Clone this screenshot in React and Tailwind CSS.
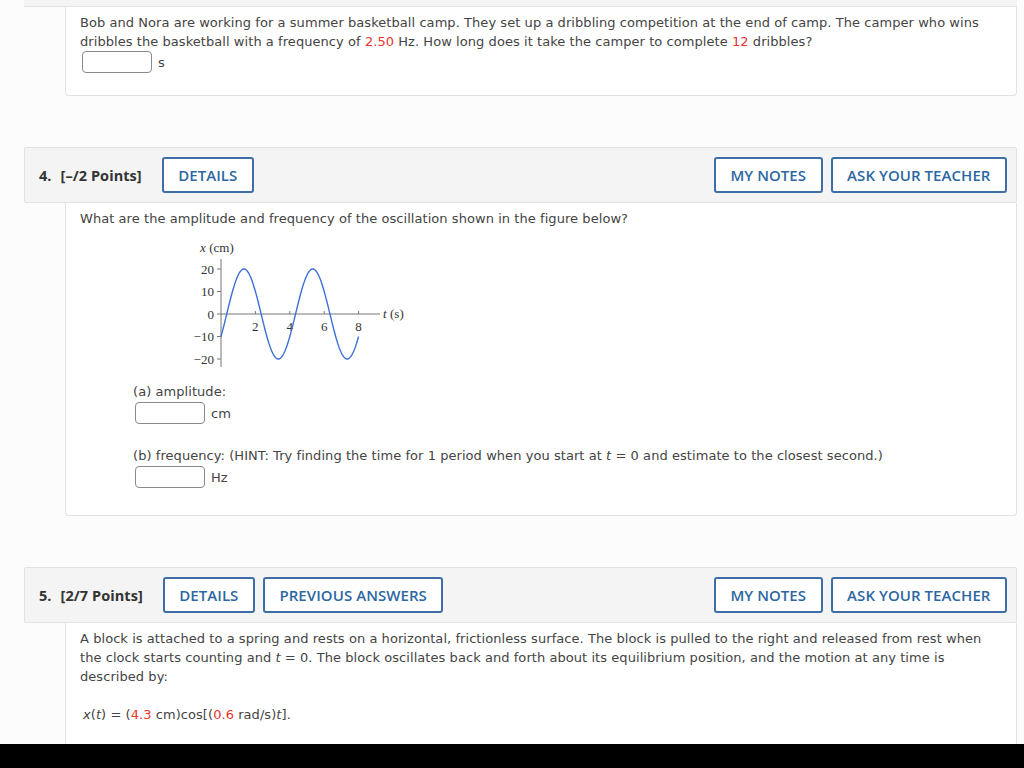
import React from "react";

const body = { fontFamily: '"DejaVu Sans", Verdana, sans-serif' };
const head = { fontFamily: '"Open Sans", "Liberation Sans", sans-serif' };

function Btn({ children }) {
	return (
		<button
			style={head}
			className="h-[36px] px-[14.5px] border-2 border-[#3d6fa6] rounded-[3px] bg-white text-[#2d67a1] text-[15px] font-semibold"
		>
			{children}
		</button>
	);
}

function Header({ num, points, left = [] }) {
	return (
		<div className="h-[56px] border border-[#e2e2e2] bg-[#f4f4f4] rounded-[2px] flex items-center pl-[14px] pr-[9px]">
			<span style={head} className="text-[14.5px] font-bold text-[#333]">
				{num}.
			</span>
			<span style={head} className="ml-[9px] text-[14.5px] font-bold text-[#333]">
				{points}
			</span>
			<div className="ml-[20px] flex gap-[8px]">
				{left.map((b) => (
					<Btn key={b}>{b}</Btn>
				))}
			</div>
			<div className="ml-auto flex gap-[8px]">
				<Btn>MY NOTES</Btn>
				<Btn>ASK YOUR TEACHER</Btn>
			</div>
		</div>
	);
}

function Answer({ unit }) {
	return (
		<div className="flex items-center gap-[6px] h-[22px]">
			<div className="w-[70px] h-[22px] border border-[#8a8a8a] rounded-[4px] bg-white" />
			<span>{unit}</span>
		</div>
	);
}

const Red = ({ children }) => <span className="text-[#e8352c]">{children}</span>;

function Graph() {
	const ox = 36;
	const oy = 86;
	const sx = 17.2;
	const sy = 2.25;
	let d = "";
	for (let t = 0; t <= 8.0001; t += 0.05) {
		const v = 20 * Math.sin((2 * Math.PI * t) / 4 - Math.PI / 6);
		d += (t === 0 ? "M" : "L") + (ox + t * sx).toFixed(2) + " " + (oy - v * sy).toFixed(2) + " ";
	}
	const ys = [20, 10, 0, -10, -20];
	const xs = [2, 4, 6, 8];
	return (
		<svg width="240" height="154" className="block" style={{ fontFamily: '"Liberation Serif", serif' }}>
			<text x="15" y="24" fontSize="13" fill="#333">
				<tspan fontStyle="italic">x</tspan> (cm)
			</text>
			<line x1={ox} y1="31" x2={ox} y2="139" stroke="#777" strokeWidth="1" />
			<line x1={ox} y1={oy} x2="195" y2={oy} stroke="#777" strokeWidth="1" />
			{ys.map((v) => (
				<g key={v}>
					<line x1={ox - 4} y1={oy - v * sy} x2={ox} y2={oy - v * sy} stroke="#777" />
					<text x="29" y={oy - v * sy + 4.5} fontSize="13" fill="#333" textAnchor="end">
						{v < 0 ? "\u2212" + Math.abs(v) : v}
					</text>
				</g>
			))}
			{xs.map((v) => (
				<g key={v}>
					<line x1={ox + v * sx} y1={oy - 3} x2={ox + v * sx} y2={oy} stroke="#777" />
					<text x={ox + v * sx} y={oy + 17} fontSize="13" fill="#333" textAnchor="middle">
						{v}
					</text>
				</g>
			))}
			<text x="198" y={oy + 4} fontSize="13" fill="#333">
				<tspan fontStyle="italic">t</tspan> (s)
			</text>
			<path d={d} fill="none" stroke="#3f6fd6" strokeWidth="1.4" />
		</svg>
	);
}

export default function App() {
	return (
		<div className="h-[768px] flex flex-col bg-[#fcfcfc] overflow-hidden">
			<div
				style={body}
				className="flex-1 overflow-hidden pl-[24px] pr-[7px] text-[13px] leading-[19px] tracking-[0.06px] text-[#444]"
			>
				{/* question 3 tail */}
				<div className="h-[7px] border-b border-[#e2e2e2] bg-[#f4f4f4]" />
				<div className="ml-[41px] border border-t-0 border-[#e2e2e2] rounded-b-[4px] bg-white pl-[14px] pr-[10px] pt-[6px] pb-[22px]">
					<p>
						Bob and Nora are working for a summer basketball camp. They set up a dribbling competition at the end of
						camp. The camper who wins dribbles the basketball with a frequency of <Red>2.50</Red> Hz. How long does it
						take the camper to complete <Red>12</Red> dribbles?
					</p>
					<div className="ml-[2px]">
						<Answer unit="s" />
					</div>
				</div>

				{/* question 4 */}
				<div className="mt-[51px]">
					<Header num="4" points="[–/2 Points]" left={["DETAILS"]} />
					<div className="ml-[41px] border border-t-0 border-[#e2e2e2] rounded-b-[4px] bg-white pl-[14px] pr-[10px] pt-[6px] pb-[27px]">
						<p>What are the amplitude and frequency of the oscillation shown in the figure below?</p>
						<div className="ml-[105px]">
							<Graph />
						</div>
						<div className="ml-[53px]">
							<p>(a) amplitude:</p>
							<div className="ml-[2px] mt-[1px]">
								<Answer unit="cm" />
							</div>
							<p className="mt-[22px]">
								(b) frequency: (HINT: Try finding the time for 1 period when you start at <i>t</i> = 0 and estimate to
								the closest second.)
							</p>
							<div className="ml-[2px] mt-[1px]">
								<Answer unit="Hz" />
							</div>
						</div>
					</div>
				</div>

				{/* question 5 */}
				<div className="mt-[51px]">
					<Header num="5" points="[2/7 Points]" left={["DETAILS", "PREVIOUS ANSWERS"]} />
					<div className="ml-[41px] border border-t-0 border-[#e2e2e2] bg-white pl-[14px] pr-[30px] pt-[6px] pb-[28px]">
						<p>
							A block is attached to a spring and rests on a horizontal, frictionless surface. The block is pulled to
							the right and released from rest when the clock starts counting and <i>t</i> = 0. The block oscillates
							back and forth about its equilibrium position, and the motion at any time is described by:
						</p>
						<p className="mt-[19px] ml-[3px]">
							<i>x</i>(<i>t</i>) = (<Red>4.3</Red> cm)cos[(<Red>0.6</Red> rad/s)<i>t</i>].
						</p>
						<div className="h-[60px]" />
					</div>
				</div>
			</div>
			<div className="h-[24px] bg-black shrink-0" />
		</div>
	);
}
